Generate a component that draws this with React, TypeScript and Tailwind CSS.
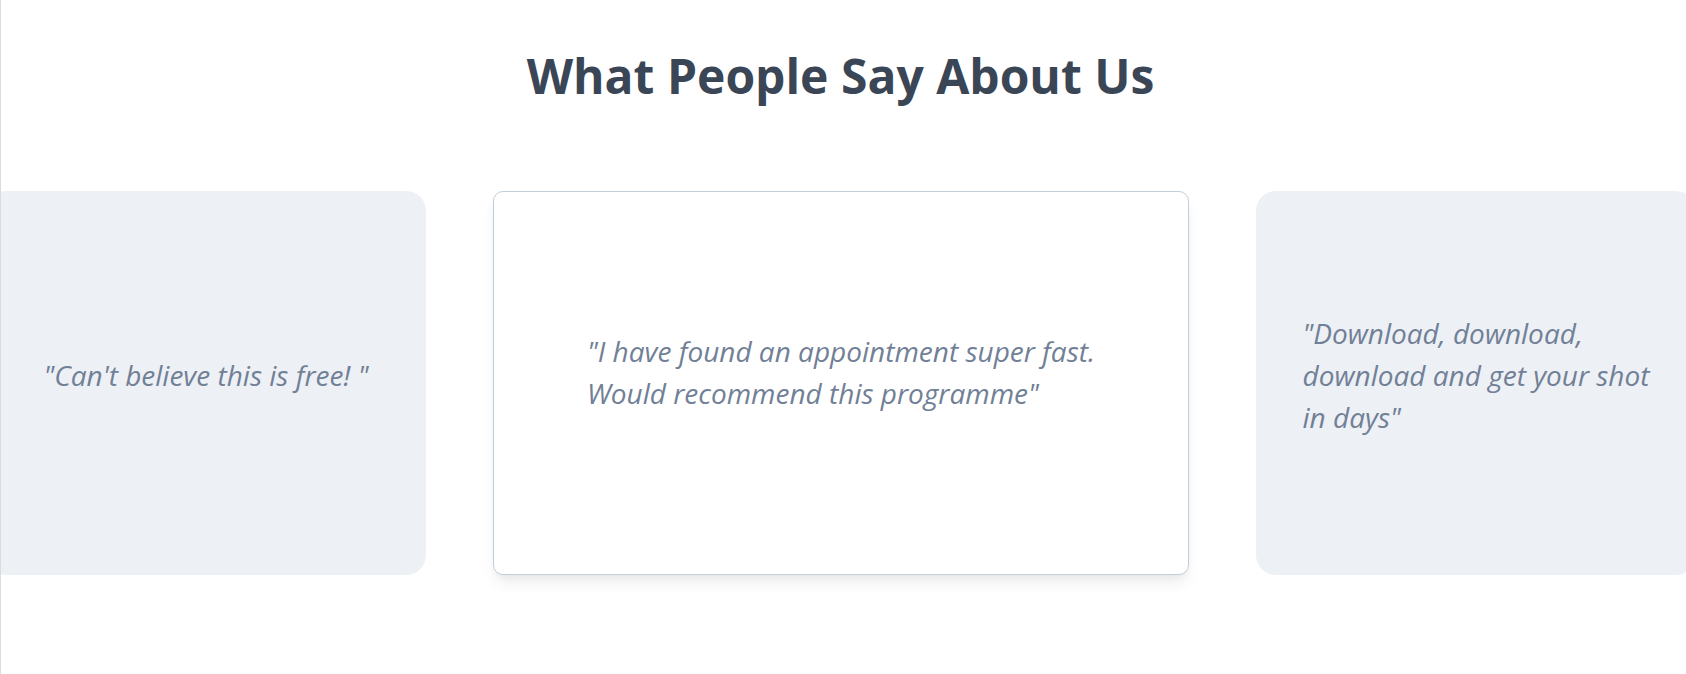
import React from 'react';

const quote = "font-['Open_Sans',sans-serif] italic font-medium text-[28px] leading-[42px] text-[#718096] text-left";

const App: React.FC = () => {
  return (
    <div className="w-full h-[674px] bg-white border-l border-[#dcdcdc] overflow-hidden font-['Open_Sans',sans-serif]">
      <h1 className="pt-[47px] pr-[6px] text-center text-[48px] leading-[58px] font-bold text-[#3a4655]">
        What People Say About Us
      </h1>

      {/* Testimonials carousel */}
      <div className="mt-[86px] flex justify-center gap-[67px] pr-[5px]">
        <div className="w-[440px] h-[384px] shrink-0 rounded-[20px] bg-[#edf0f5] flex items-center justify-center pb-4">
          <p className={quote}>"Can't believe this is free! "</p>
        </div>

        <div className="w-[696px] h-[384px] shrink-0 rounded-[10px] bg-white border border-[#c3cedb] shadow-[0_10px_15px_-3px_rgba(0,0,0,0.08),0_4px_6px_-2px_rgba(0,0,0,0.04)] flex items-center justify-center pb-[22px]">
          <p className={quote}>
            "I have found an appointment super fast.
            <br />
            Would recommend this programme"
          </p>
        </div>

        <div className="w-[440px] h-[384px] shrink-0 rounded-[20px] bg-[#edf0f5] flex items-center justify-center pb-4">
          <p className={quote}>
            "Download, download,
            <br />
            download and get your shot
            <br />
            in days"
          </p>
        </div>
      </div>
    </div>
  );
};

export default App;
